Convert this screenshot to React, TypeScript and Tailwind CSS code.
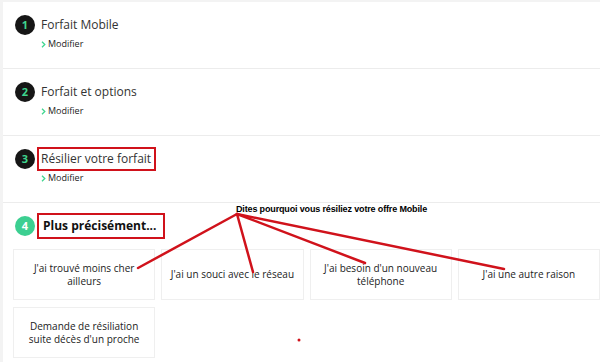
import React from 'react';

const font = { fontFamily: '"Open Sans", "Noto Sans", sans-serif' };

function Chevron() {
    return (
        <svg width="5" height="7" viewBox="0 0 5 7" className="mr-[2px]">
            <path d="M1 0.8 L3.8 3.5 L1 6.2" fill="none" stroke="#3fd68f" strokeWidth="1.3" />
        </svg>
    );
}

function Step({ n, title, boxed }: { n: number; title: string; boxed?: boolean }) {
    return (
        <div className="h-[67px] border-b border-[#ececec] pl-[12px] pt-[13px] flex gap-[6px]">
            <div className="w-[20px] h-[20px] rounded-full bg-[#161616] text-[#3fd68f] text-[11px] font-bold flex items-center justify-center shrink-0">
                {n}
            </div>
            <div className="flex flex-col">
                <div
                    className={`text-[12px] text-[#333] leading-[20px] whitespace-nowrap ${boxed ? 'outline-2 outline-[#d0121b] -ml-[2px] pl-[2px] pr-[3px]' : ''}`}
                >
                    {title}
                </div>
                <div className="flex items-center text-[9px] text-[#222] mt-[3px] leading-[12px]">
                    <Chevron />
                    Modifier
                </div>
            </div>
        </div>
    );
}

function Card({ children }: { children: React.ReactNode }) {
    return (
        <div className="h-[51px] border border-[#efefef] flex items-center justify-center text-center text-[10px] leading-[13px] text-[#222] px-2">
            {children}
        </div>
    );
}

export default function App() {
    return (
        <div className="w-[600px] h-[362px] bg-[#f3f3f3] pt-[2px] pl-[3px] overflow-hidden relative" style={font}>
            <div className="bg-white h-full">
                <Step n={1} title="Forfait Mobile" />
                <Step n={2} title="Forfait et options" />
                <Step n={3} title="Résilier votre forfait" boxed />

                {/* Step 4 */}
                <div className="pl-[12px] pt-[10px]">
                    <div className="flex items-center gap-[6px]">
                        <div className="w-[20px] h-[20px] rounded-full bg-[#3ccf91] text-white text-[11px] font-bold flex items-center justify-center shrink-0">
                            4
                        </div>
                        <div className="border-2 border-[#d0121b] h-[26px] w-[128px] -ml-[4px] flex items-center pl-[4px] text-[12px] font-bold text-[#111] whitespace-nowrap">
                            Plus précisément...
                        </div>
                    </div>
                </div>
                <div className="grid grid-cols-4 gap-x-[6px] gap-y-[7px] pl-[10px] mt-[10px]">
                    <Card>J'ai trouvé moins cher<br />ailleurs</Card>
                    <Card>J'ai un souci avec le réseau</Card>
                    <Card>J'ai besoin d'un nouveau<br />téléphone</Card>
                    <Card>J'ai une autre raison</Card>
                    <Card>Demande de résiliation<br />suite décès d'un proche</Card>
                </div>
            </div>

            {/* annotation overlay */}
            <div
                className="absolute left-[236px] top-[203px] text-[9px] font-bold text-black tracking-[-0.15px]"
                style={{ fontFamily: '"Liberation Sans", Arial, sans-serif' }}
            >
                Dites pourquoi vous résiliez votre offre Mobile
            </div>
            <svg className="absolute inset-0 pointer-events-none" width="600" height="362">
                <g stroke="#d0121b" strokeWidth="2.5" strokeLinecap="round">
                    <line x1="237" y1="214" x2="138" y2="268" />
                    <line x1="237" y1="214" x2="253" y2="272" />
                    <line x1="237" y1="214" x2="365" y2="263" />
                    <line x1="237" y1="214" x2="504" y2="269" />
                </g>
                <circle cx="299" cy="340" r="1.5" fill="#d0121b" />
            </svg>
        </div>
    );
}
